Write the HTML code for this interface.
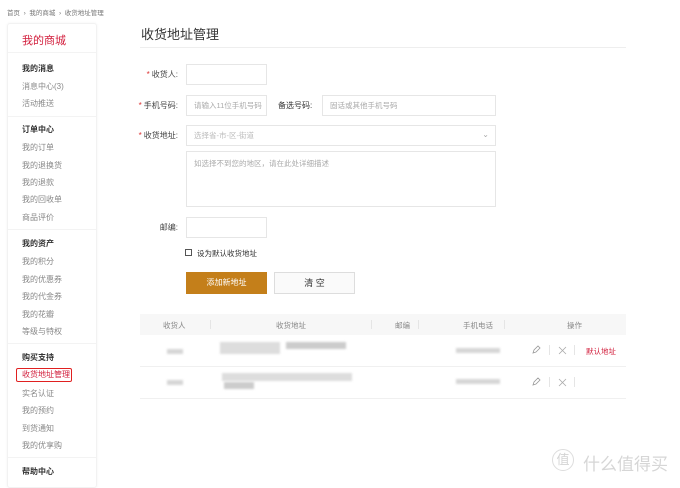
<!DOCTYPE html>
<html><head><meta charset="utf-8"><style>
*{margin:0;padding:0;box-sizing:border-box}
body{width:680px;height:485px;background:#fff;font-family:"Liberation Sans","Noto Sans CJK SC",sans-serif;color:#333;position:relative;overflow:hidden}
.a{position:absolute;white-space:nowrap}
.s{font-size:8px;color:#888}
.b{font-size:8px;color:#333;font-weight:bold}
.hr{position:absolute;left:8px;width:88px;height:1px;background:#f3f3f3}
.in{position:absolute;border:1px solid #e6e6e6;background:#fff;font-size:7.5px;color:#aaa;padding-left:7px;display:flex;align-items:center}
.lb{position:absolute;font-size:8px;color:#444;text-align:right;width:60px}
.lb i{color:#d33;font-style:normal;margin-right:2px}
.th{position:absolute;top:314px;font-size:7.5px;color:#888}
.blur{position:absolute;background:#d6d6d6;filter:blur(1px)}
</style></head><body>
<div class="a" style="left:7px;top:7px;font-size:6.5px;color:#777">首页 &nbsp;›&nbsp; 我的商城 &nbsp;›&nbsp; 收货地址管理</div>
<div class="a" style="left:7px;top:23px;width:90px;height:465px;border:1px solid #f2f2f2;border-radius:3px;box-shadow:0 0 3px #f4f4f4"></div>
<div class="a" style="left:22px;top:32px;font-size:11px;color:#d21e3c">我的商城</div>
<div class="hr" style="top:52px"></div>
<div class="a b" style="left:22px;top:63px">我的消息</div>
<div class="a s" style="left:22px;top:81px">消息中心(3)</div>
<div class="a s" style="left:22px;top:98px">活动推送</div>
<div class="hr" style="top:116px"></div>
<div class="a b" style="left:22px;top:124px">订单中心</div>
<div class="a s" style="left:22px;top:142px">我的订单</div>
<div class="a s" style="left:22px;top:160px">我的退换货</div>
<div class="a s" style="left:22px;top:177px">我的退款</div>
<div class="a s" style="left:22px;top:194px">我的回收单</div>
<div class="a s" style="left:22px;top:212px">商品评价</div>
<div class="hr" style="top:229px"></div>
<div class="a b" style="left:22px;top:238px">我的资产</div>
<div class="a s" style="left:22px;top:256px">我的积分</div>
<div class="a s" style="left:22px;top:274px">我的优惠券</div>
<div class="a s" style="left:22px;top:291px">我的代金券</div>
<div class="a s" style="left:22px;top:309px">我的花瓣</div>
<div class="a s" style="left:22px;top:326px">等级与特权</div>
<div class="hr" style="top:343px"></div>
<div class="a b" style="left:22px;top:352px">购买支持</div>
<div class="a" style="left:16px;top:368px;width:56px;height:14px;border:1.5px solid #e02020;border-radius:2px;font-size:8px;color:#d21e3c;padding-left:5px;line-height:11px">收货地址管理</div>
<div class="a s" style="left:22px;top:388px">实名认证</div>
<div class="a s" style="left:22px;top:405px">我的预约</div>
<div class="a s" style="left:22px;top:423px">到货通知</div>
<div class="a s" style="left:22px;top:440px">我的优享购</div>
<div class="hr" style="top:457px"></div>
<div class="a b" style="left:22px;top:466px">帮助中心</div>

<div class="a" style="left:141px;top:24px;font-size:13px;color:#333">收货地址管理</div>
<div class="a" style="left:140px;top:47px;width:486px;height:1px;background:#eee"></div>

<div class="lb" style="left:118px;top:69px"><i>*</i>收货人:</div>
<div class="in" style="left:186px;top:64px;width:81px;height:21px"></div>
<div class="lb" style="left:118px;top:100px"><i>*</i>手机号码:</div>
<div class="in" style="left:186px;top:95px;width:81px;height:21px">请输入11位手机号码</div>
<div class="a" style="left:278px;top:100px;font-size:8px;color:#333">备选号码:</div>
<div class="in" style="left:322px;top:95px;width:174px;height:21px">固话或其他手机号码</div>
<div class="lb" style="left:118px;top:130px"><i>*</i>收货地址:</div>
<div class="in" style="left:186px;top:125px;width:310px;height:21px;color:#bbb">选择省-市-区-街道<span style="position:absolute;right:6px;top:4px;color:#aaa;font-size:8px">&#8964;</span></div>
<div class="in" style="left:186px;top:151px;width:310px;height:56px;align-items:flex-start;padding-top:6px">如选择不到您的地区，请在此处详细描述</div>
<div class="lb" style="left:118px;top:222px">邮编:</div>
<div class="in" style="left:186px;top:217px;width:81px;height:21px"></div>
<div class="a" style="left:185px;top:249px;width:7px;height:7px;border:1px solid #555"></div>
<div class="a" style="left:197px;top:248px;font-size:7.5px;color:#333">设为默认收货地址</div>
<div class="a" style="left:186px;top:272px;width:81px;height:22px;background:#c47f1a;color:#fff;font-size:8px;text-align:center;line-height:22px">添加新地址</div>
<div class="a" style="left:274px;top:272px;width:81px;height:22px;border:1px solid #ddd;background:#fafafa;color:#333;font-size:9px;text-align:center;line-height:20px">清 空</div>

<div class="a" style="left:140px;top:314px;width:486px;height:21px;background:#f7f7f7"></div>
<div class="th" style="left:163px;top:320px">收货人</div>
<div class="th" style="left:276px;top:320px">收货地址</div>
<div class="th" style="left:395px;top:320px">邮编</div>
<div class="th" style="left:463px;top:320px">手机电话</div>
<div class="th" style="left:567px;top:320px">操作</div>
<div class="a" style="left:210px;top:320px;width:1px;height:9px;background:#e5e5e5"></div>
<div class="a" style="left:371px;top:320px;width:1px;height:9px;background:#e5e5e5"></div>
<div class="a" style="left:418px;top:320px;width:1px;height:9px;background:#e5e5e5"></div>
<div class="a" style="left:504px;top:320px;width:1px;height:9px;background:#e5e5e5"></div>
<div class="a" style="left:140px;top:366px;width:486px;height:1px;background:#f0f0f0"></div>
<div class="a" style="left:140px;top:398px;width:486px;height:1px;background:#f0f0f0"></div>

<div class="blur" style="left:167px;top:349px;width:16px;height:5px"></div>
<div class="blur" style="left:220px;top:342px;width:60px;height:12px;background:#ddd"></div>
<div class="blur" style="left:286px;top:342px;width:60px;height:7px;background:#ccc"></div>
<div class="blur" style="left:456px;top:348px;width:44px;height:5px"></div>
<div class="blur" style="left:167px;top:380px;width:16px;height:5px"></div>
<div class="blur" style="left:222px;top:373px;width:130px;height:8px;background:#ddd"></div>
<div class="blur" style="left:224px;top:382px;width:30px;height:7px;background:#ccc"></div>
<div class="blur" style="left:456px;top:379px;width:44px;height:5px"></div>

<svg class="a" style="left:531px;top:345px" width="10" height="10" viewBox="0 0 10 10"><path d="M2 8l1-3 4-4 2 2-4 4z" fill="none" stroke="#999" stroke-width=".8"/></svg>
<div class="a" style="left:549px;top:345px;width:1px;height:10px;background:#e5e5e5"></div>
<svg class="a" style="left:558px;top:346px" width="9" height="9" viewBox="0 0 9 9"><path d="M1 1l7 7M8 1l-7 7" stroke="#aaa" stroke-width=".8"/></svg>
<div class="a" style="left:574px;top:345px;width:1px;height:10px;background:#e5e5e5"></div>
<div class="a" style="left:586px;top:346px;font-size:7.5px;color:#d21e3c">默认地址</div>
<svg class="a" style="left:531px;top:377px" width="10" height="10" viewBox="0 0 10 10"><path d="M2 8l1-3 4-4 2 2-4 4z" fill="none" stroke="#999" stroke-width=".8"/></svg>
<div class="a" style="left:549px;top:377px;width:1px;height:10px;background:#e5e5e5"></div>
<svg class="a" style="left:558px;top:378px" width="9" height="9" viewBox="0 0 9 9"><path d="M1 1l7 7M8 1l-7 7" stroke="#aaa" stroke-width=".8"/></svg>
<div class="a" style="left:574px;top:377px;width:1px;height:10px;background:#e5e5e5"></div>

<div class="a" style="left:552px;top:449px;width:22px;height:22px;border:1.5px solid #ddd;border-radius:50%;font-size:13px;color:#d4d4d4;text-align:center;line-height:19px">值</div>
<div class="a" style="left:583px;top:450px;font-size:17px;color:#d6d6d6">什么值得买</div>
</body></html>
